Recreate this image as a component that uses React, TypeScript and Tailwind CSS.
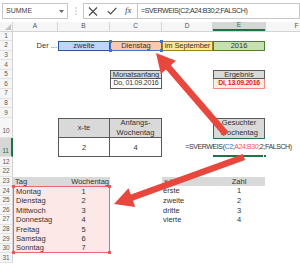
import React from 'react';

const CA = 'w-[45px]';
const CB = 'w-[52px]';
const CC = 'w-[52px]';
const CD = 'w-[51px]';
const CE = 'w-[52px]';
const CF = 'w-[62px]';

function Cell({ w, cls = '', children }: { w: string; cls?: string; children?: React.ReactNode }) {
  return <div className={`${w} shrink-0 h-full flex items-center whitespace-nowrap ${cls}`}>{children}</div>;
}

function Row({ h, n, active = false, bottom = false, children }: { h: string; n: string; active?: boolean; bottom?: boolean; children?: React.ReactNode }) {
  const head = active
    ? 'bg-[#d6d6d6] text-[#217346] border-r-2 border-r-[#217346]'
    : 'bg-[#f6f6f6] text-[#5b5b5b] border-r border-r-[#d4d4d4]';
  return (
    <div className={`flex ${h}`}>
      <div className={`w-[13px] shrink-0 h-full flex justify-center text-[6.5px] border-b border-b-[#e2e2e2] ${bottom ? 'items-end pb-[1px]' : 'items-center'} ${head}`}>
        {n}
      </div>
      {children}
    </div>
  );
}

function Handle({ pos, color }: { pos: string; color: string }) {
  return <div className={`absolute w-[3px] h-[3px] ${pos} ${color}`} />;
}

const days = ['Montag', 'Dienstag', 'Mittwoch', 'Donnestag', 'Freitag', 'Samstag', 'Sonntag'];
const ord = ['erste', 'zweite', 'dritte', 'vierte'];

function Arrow({ x1, y1, x2, y2 }: { x1: number; y1: number; x2: number; y2: number }) {
  const dx = x2 - x1;
  const dy = y2 - y1;
  const len = Math.hypot(dx, dy);
  const ux = dx / len;
  const uy = dy / len;
  const px = -uy;
  const py = ux;
  const hl = 19;
  const hw = 10;
  const bx = x2 - ux * hl;
  const by = y2 - uy * hl;
  const pts = `${x2},${y2} ${bx + px * hw},${by + py * hw} ${bx - px * hw},${by - py * hw}`;
  return (
    <g>
      <line x1={x1} y1={y1} x2={bx + ux * 2} y2={by + uy * 2} stroke="#e8473d" strokeWidth={6.5} />
      <polygon points={pts} fill="#e8473d" />
    </g>
  );
}

export default function App() {
  return (
    <div className="relative w-[300px] h-[264px] overflow-hidden bg-white text-[#333] text-[7.5px] font-['Liberation_Sans',Arial,sans-serif]">
      {/* Formula bar */}
      <div className="h-[22px] flex items-center text-[#444]">
        <div className="ml-[2px] w-[66px] h-[16px] border border-[#c6c6c6] flex items-center justify-between pl-[3px] pr-[3px] text-[7px]">
          <span>SUMME</span>
          <svg width="5" height="3" viewBox="0 0 5 3"><polygon points="0,0 5,0 2.5,3" fill="#666" /></svg>
        </div>
        <div className="w-[15px] flex justify-center">
          <svg width="2" height="8" viewBox="0 0 2 8">
            <circle cx="1" cy="1" r="0.7" fill="#aaa" />
            <circle cx="1" cy="4" r="0.7" fill="#aaa" />
            <circle cx="1" cy="7" r="0.7" fill="#aaa" />
          </svg>
        </div>
        <div className="w-[54px] h-[16px] border border-r-0 border-[#c6c6c6] flex items-center">
          <svg className="ml-[4px]" width="10" height="9" viewBox="0 0 10 9">
            <path d="M1 0.5 L9 8.5 M9 0.5 L1 8.5" stroke="#444" strokeWidth="1.1" />
          </svg>
          <svg className="ml-[9px]" width="10" height="8" viewBox="0 0 10 8">
            <path d="M0.8 4.2 L3.6 7 L9.3 0.8" stroke="#444" strokeWidth="1.2" fill="none" />
          </svg>
          <span className="ml-[8px] italic text-[9px] text-[#444] font-['Liberation_Serif',serif]">fx</span>
        </div>
        <div className="flex-1 h-[16px] border border-[#c6c6c6] flex items-center pl-[3px] text-[7px] tracking-[-0.4px] text-[#333] whitespace-nowrap overflow-hidden">
          =SVERWEIS(C2;A24:B30;2;FALSCH)
        </div>
      </div>

      {/* Column headers */}
      <div className="flex h-[9.5px] text-[6.5px] text-[#555] bg-[#f6f6f6] border-b border-[#d4d4d4]">
        <div className="w-[13px] shrink-0 h-full relative border-r border-[#d4d4d4]">
          <svg className="absolute right-[1px] bottom-[1px]" width="6" height="6" viewBox="0 0 6 6"><polygon points="6,0 6,6 0,6" fill="#c2c2c2" /></svg>
        </div>
        <Cell w={CA} cls="justify-center border-r border-[#d4d4d4]">A</Cell>
        <Cell w={CB} cls="justify-center border-r border-[#d4d4d4]">B</Cell>
        <Cell w={CC} cls="justify-center border-r border-[#d4d4d4]">C</Cell>
        <Cell w={CD} cls="justify-center border-r border-[#d4d4d4]">D</Cell>
        <Cell w={CE} cls="justify-center bg-[#d6d6d6] text-[#217346] border-b-2 border-[#217346]">E</Cell>
        <Cell w={CF} cls="justify-center border-l border-[#d4d4d4]">F</Cell>
      </div>

      <Row h="h-[9.5px]" n="1" />
      <Row h="h-[9.6px]" n="2">
        <Cell w={CA} cls="justify-end pr-[1px]">Der ...</Cell>
        <Cell w={CB} cls="justify-center bg-[#bdd7ee] border border-[#2f5597]">zweite</Cell>
        <Cell w={CC} cls="justify-center bg-[#f8cbad] border border-[#4472c4] relative">
          Dienstag
          <Handle pos="-left-[2px] -top-[2px]" color="bg-[#4472c4]" />
          <Handle pos="-right-[2px] -top-[2px]" color="bg-[#4472c4]" />
          <Handle pos="-left-[2px] -bottom-[2px]" color="bg-[#4472c4]" />
          <Handle pos="-right-[2px] -bottom-[2px]" color="bg-[#4472c4]" />
        </Cell>
        <Cell w={CD} cls="justify-center bg-[#ffe699] border border-[#a08020] tracking-[-0.1px]">im September</Cell>
        <Cell w={CE} cls="justify-center bg-[#c6e0b4] border border-[#507e32]">2016</Cell>
      </Row>
      <Row h="h-[9.6px]" n="3" />
      <Row h="h-[9.6px]" n="4" />
      <Row h="h-[9.6px]" n="5">
        <Cell w={CA} />
        <Cell w={CB} />
        <Cell w={CC} cls="justify-center bg-[#d9d9d9] border border-[#595959] tracking-[-0.1px]">Monatsanfang</Cell>
        <Cell w={CD} />
        <Cell w={CE} cls="justify-center bg-[#d9d9d9] border border-[#595959]">Ergebnis</Cell>
      </Row>
      <Row h="h-[9.6px]" n="6">
        <Cell w={CA} />
        <Cell w={CB} />
        <Cell w={CC} cls="justify-center border border-t-0 border-[#595959] text-[7px] tracking-[-0.2px]">Do, 01.09.2016</Cell>
        <Cell w={CD} />
        <Cell w={CE} cls="justify-center font-bold text-[7px] tracking-[-0.3px] text-[#e3211c] bg-[#fdeee4] border border-t-0 border-[#f28b82]">Di, 13.09.2016</Cell>
      </Row>
      <Row h="h-[9.6px]" n="7" />
      <Row h="h-[9.6px]" n="8" />
      <Row h="h-[9.6px]" n="9" />
      <Row h="h-[20.2px]" n="10" bottom>
        <Cell w={CA} />
        <Cell w={CB} cls="justify-center bg-[#d9d9d9] border border-[#595959]">x-te</Cell>
        <Cell w={CC} cls="justify-center text-center leading-[10px] bg-[#d9d9d9] border-y border-r border-[#595959]">
          <span>Anfangs-<br />Wochentag</span>
        </Cell>
        <Cell w={CD} />
        <Cell w={CE} cls="justify-center text-center leading-[10px] bg-[#d9d9d9] border-x border-t border-[#595959]">
          <span>Gesuchter<br />Wochentag</span>
        </Cell>
      </Row>
      <Row h="h-[19.5px]" n="11" active bottom>
        <Cell w={CA} />
        <Cell w={CB} cls="justify-center border-x border-b border-[#595959]">2</Cell>
        <Cell w={CC} cls="justify-center border-r border-b border-[#595959]">4</Cell>
        <Cell w={CD} />
        <Cell w={CE} cls="justify-center border-t border-b-2 border-[#217346] relative">
          <span className="text-[#333] text-[7px] tracking-[-0.4px]">
            =SVERWEIS(<span className="text-[#4472c4]">C2</span>;<span className="text-[#e8585a]">A24:B30</span>;2;FALSCH)
          </span>
          <span className="inline-block w-[1px] h-[9px] bg-[#222] ml-[1px]" />
          <div className="absolute -right-[2px] -bottom-[3px] w-[4px] h-[4px] bg-[#217346] border border-white" />
        </Cell>
      </Row>
      <Row h="h-[9.6px]" n="12" />
      <Row h="h-[9.6px]" n="22" />
      <Row h="h-[9.6px]" n="23">
        <Cell w={CA} cls="pl-[2px] bg-[#d9d9d9]">Tag</Cell>
        <Cell w={CB} cls="justify-end pr-[1px] bg-[#d9d9d9]">Wochentag</Cell>
        <Cell w={CC} />
        <Cell w={CD} cls="pl-[2px] bg-[#d9d9d9]">x-te</Cell>
        <Cell w={CE} cls="justify-center bg-[#d9d9d9]">Zahl</Cell>
      </Row>
      {days.map((d, i) => (
        <Row key={d} h="h-[9.6px]" n={String(24 + i)}>
          <Cell
            w={CA}
            cls={`pl-[2px] bg-[#fde8e8] border-l border-[#e8686c] relative ${i === 0 ? 'border-t' : ''} ${i === 6 ? 'border-b' : ''}`}
          >
            {d}
            {i === 0 && <Handle pos="-left-[2px] -top-[2px]" color="bg-[#e8585a]" />}
            {i === 6 && <Handle pos="-left-[2px] -bottom-[2px]" color="bg-[#e8585a]" />}
          </Cell>
          <Cell
            w={CB}
            cls={`justify-center bg-[#fde8e8] border-r border-[#e8686c] relative ${i === 0 ? 'border-t' : ''} ${i === 6 ? 'border-b' : ''}`}
          >
            {i + 1}
            {i === 0 && <Handle pos="-right-[2px] -top-[2px]" color="bg-[#e8585a]" />}
            {i === 6 && <Handle pos="-right-[2px] -bottom-[2px]" color="bg-[#e8585a]" />}
          </Cell>
          <Cell w={CC} />
          <Cell w={CD} cls="pl-[1px]">{ord[i] ?? ''}</Cell>
          <Cell w={CE} cls="justify-center">{i < 4 ? i + 1 : ''}</Cell>
        </Row>
      ))}
      <Row h="h-[9.6px]" n="31" />

      {/* Annotation arrows */}
      <svg className="absolute left-0 top-0 pointer-events-none" width="300" height="264" viewBox="0 0 300 264">
        <Arrow x1={226} y1={134} x2={156} y2={53} />
        <Arrow x1={244} y1={157} x2={114} y2={204} />
      </svg>
    </div>
  );
}
